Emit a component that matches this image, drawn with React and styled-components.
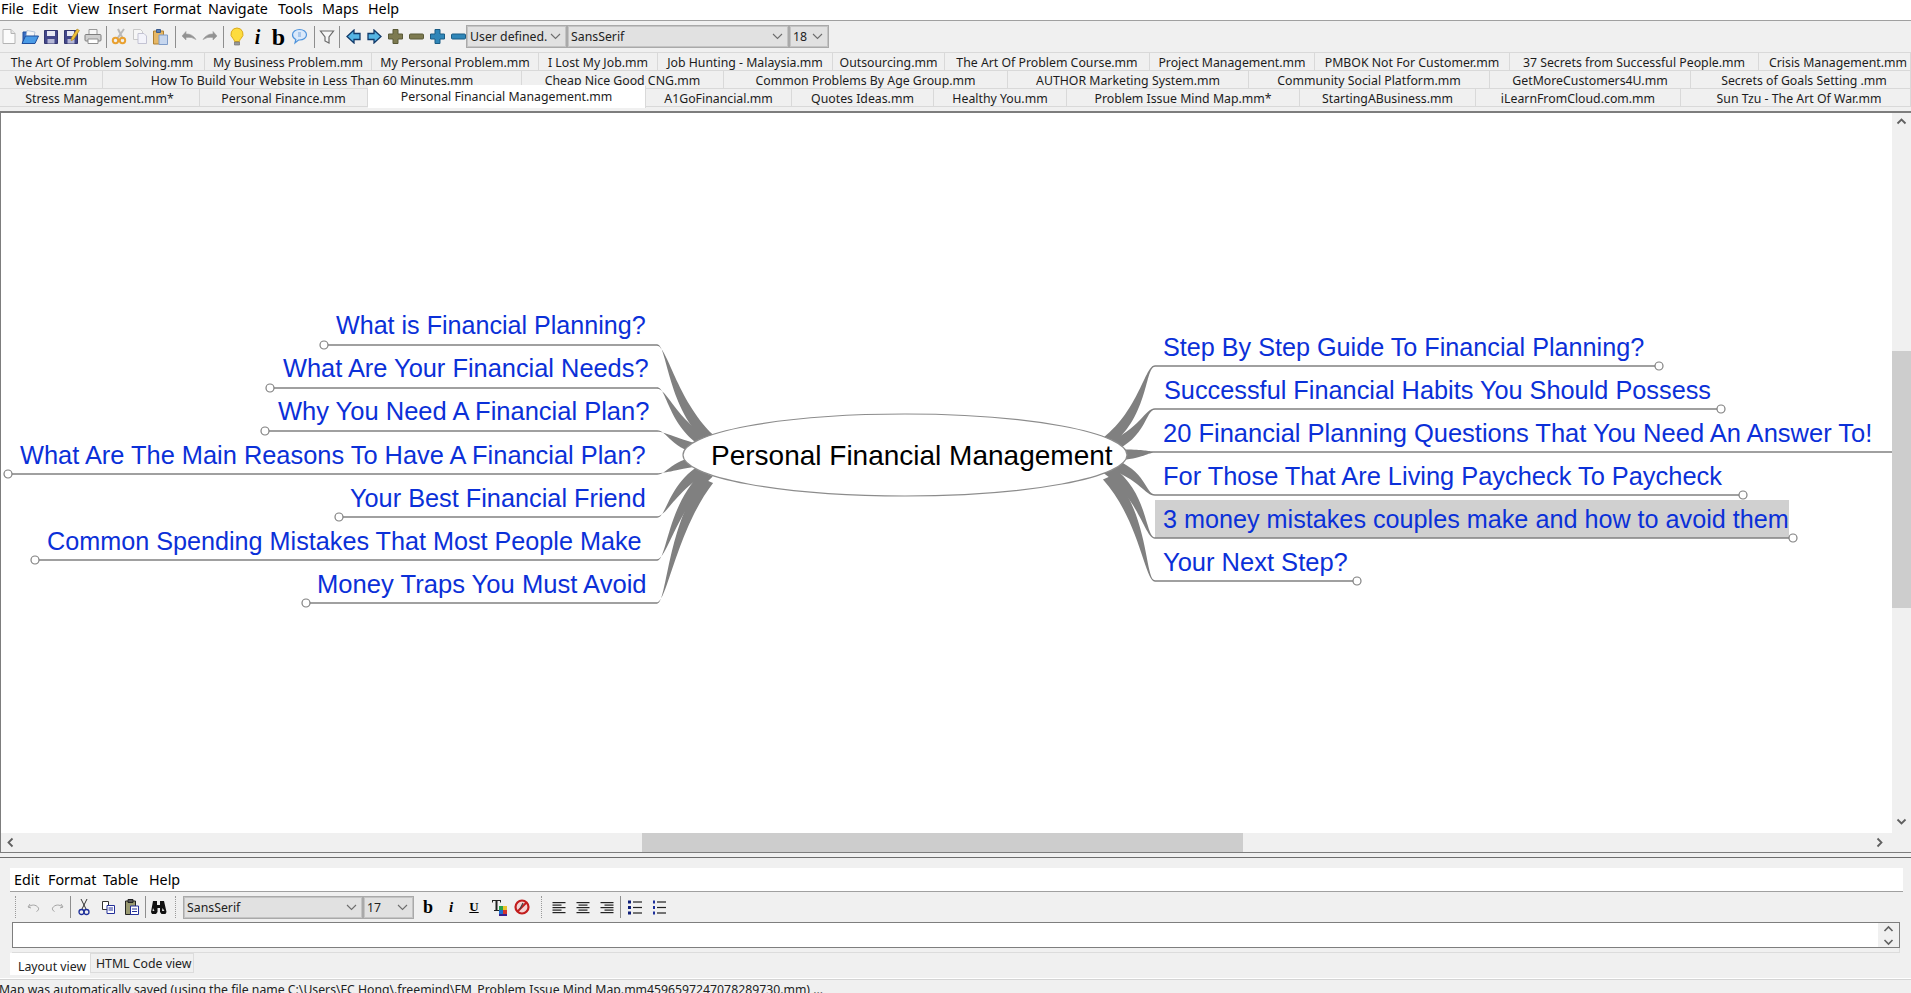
import React from "react";
import styled, { createGlobalStyle } from "styled-components";

const GlobalStyle = createGlobalStyle`
  html, body { margin: 0; padding: 0; height: 100%; overflow: hidden; background: #f0f0f0; }
  #root { height: 100%; }
`;

const UI_FONT = `"Noto Sans", "Liberation Sans", sans-serif`;
const CANVAS_TOP = 112;

const Page = styled.div`
  display: flex;
  flex-direction: column;
  height: 993px;
  overflow: hidden;
  background: #f0f0f0;
  color: #000;
  font-family: ${UI_FONT};
`;

const MenuBar = styled.div`
  display: flex;
  height: 20px;
  flex: none;
  background: #fff;
  border-bottom: 1px solid #a0a0a0;
`;
const MenuItem = styled.span`
  width: ${(p) => p.$w}px;
  font-size: 14.3px;
  line-height: ${(p) => p.$lh || 17}px;
  padding-left: ${(p) => p.$pad || 0}px;
  box-sizing: border-box;
  white-space: nowrap;
`;

const Toolbar = styled.div`
  display: flex;
  align-items: center;
  height: 31px;
  flex: none;
  margin-left: -2px;
`;
const Slot = styled.div`
  width: 21px;
  height: 24px;
  flex: none;
  display: flex;
  align-items: center;
  justify-content: center;
`;
const Sep = styled.div`
  width: 1px;
  height: 22px;
  flex: none;
  background: #8e8e8e;
  margin: 0 ${(p) => p.$after}px 0 ${(p) => p.$before}px;
`;
const GlyphText = styled.span`
  font-family: "Liberation Serif", serif;
  font-weight: bold;
  font-style: ${(p) => (p.$italic ? "italic" : "normal")};
  font-size: ${(p) => p.$size}px;
  line-height: 20px;
  text-decoration: ${(p) => (p.$under ? "underline" : "none")};
`;
const Combo = styled.div`
  width: ${(p) => p.$w}px;
  height: 23px;
  flex: none;
  box-sizing: border-box;
  margin-left: ${(p) => p.$ml || 0}px;
  display: flex;
  align-items: center;
  justify-content: space-between;
  background: #e1e1e1;
  border: 1px solid #a9a9a9;
  outline: 1px solid #c4c4c4;
  outline-offset: -2px;
  padding: 0 5px 0 3px;
  font-size: 12.3px;
  color: #222;
`;
const Chevron = () => (
  <svg width="11" height="7" viewBox="0 0 11 7">
    <path d="M1 1l4.5 4.5L10 1" fill="none" stroke="#6d6d6d" strokeWidth="1.1" />
  </svg>
);

const TabStack = styled.div`
  flex: none;
  height: 59px;
  position: relative;
`;
const TabRow = styled.div`
  display: flex;
  height: ${(p) => p.$h}px;
  overflow: ${(p) => (p.$open ? "visible" : "hidden")};
  align-items: flex-start;
`;
const Tab = styled.div`
  flex: ${(p) => (p.$last ? "1" : "none")};
  width: ${(p) => p.$w}px;
  height: ${(p) => (p.$active ? 23 : p.$h)}px;
  margin-top: ${(p) => (p.$active ? -3 : 0)}px;
  box-sizing: border-box;
  position: relative;
  padding-left: ${(p) => (p.$last ? 7 : 0)}px;
  background: ${(p) => (p.$active ? "#fff" : "#f0f0f0")};
  border-top: 1px solid ${(p) => (p.$active ? "#fff" : "#d9d9d9")};
  border-right: 1px solid #d9d9d9;
  border-bottom: ${(p) => (p.$rowEnd && !p.$active ? "1px solid #d9d9d9" : "none")};
  text-align: center;
  white-space: nowrap;
  font-size: 12.3px;
  line-height: ${(p) => (p.$active ? 22 : 19)}px;
  color: #1c1c1c;
  overflow: hidden;
`;

const CanvasFrame = styled.div`
  flex: none;
  height: 742px;
  display: grid;
  grid-template-columns: 1fr 19px;
  grid-template-rows: 1fr 19px;
  border-top: 2px solid #7d7d7d;
  border-bottom: 1px solid #7d7d7d;
  box-sizing: border-box;
`;
const Canvas = styled.div`
  position: relative;
  overflow: hidden;
  background: #fff;
  border-left: 1px solid #7d7d7d;
`;
const MapLines = styled.svg`
  position: absolute;
  left: -1px;
  top: 0;
`;
const Topic = styled.div`
  position: absolute;
  left: ${(p) => p.$x - 1}px;
  top: ${(p) => p.$base - CANVAS_TOP - 24}px;
  font-family: "Liberation Sans", sans-serif;
  font-size: ${(p) => p.$size}px;
  line-height: 30px;
  color: ${(p) => (p.$root ? "#000" : "#0b30d8")};
  white-space: nowrap;
`;
const Highlight = styled.div`
  position: absolute;
  left: 1154px;
  top: ${499 - CANVAS_TOP}px;
  width: 634px;
  height: 38px;
  background: #d0d0d0;
`;

const VScroll = styled.div`
  background: #f0f0f0;
  position: relative;
`;
const VThumb = styled.div`
  position: absolute;
  left: 0;
  right: 0;
  top: ${350 - CANVAS_TOP}px;
  height: 257px;
  background: #cdcdcd;
`;
const HScroll = styled.div`
  background: #f0f0f0;
  position: relative;
  border-left: 1px solid #7d7d7d;
`;
const HThumb = styled.div`
  position: absolute;
  left: 641px;
  top: 0;
  bottom: 0;
  width: 601px;
  background: #cdcdcd;
`;
const ScrollArrow = styled.svg`
  position: absolute;
  left: ${(p) => p.$x}px;
  top: ${(p) => p.$y}px;
`;
const Corner = styled.div`
  background: #f0f0f0;
`;

const Divider = styled.div`
  flex: none;
  height: 5px;
  box-sizing: border-box;
  border-bottom: 1px solid #6d6d6d;
`;
const EditorPanel = styled.div`
  flex: none;
  height: 120px;
  padding: 10px 8px 0 10px;
  box-sizing: border-box;
  display: flex;
  flex-direction: column;
`;
const EditorMenu = styled.div`
  display: flex;
  height: 24px;
  flex: none;
  box-sizing: border-box;
  background: #fff;
  border-bottom: 1px solid #a0a0a0;
  padding-left: 4px;
`;
const EditorBar = styled.div`
  display: flex;
  align-items: center;
  height: 30px;
  flex: none;
`;
const Grip = styled.div`
  width: 1px;
  height: 22px;
  flex: none;
  border-left: 1px dotted #9a9a9a;
  box-sizing: border-box;
  margin: 0 ${(p) => p.$after}px 0 ${(p) => p.$before}px;
`;
const EdSlot = styled.div`
  width: ${(p) => p.$w || 24}px;
  height: 24px;
  flex: none;
  display: flex;
  align-items: center;
  justify-content: center;
`;
const InputWrap = styled.div`
  height: 31px;
  flex: none;
  margin: 0 3px 0 2px;
  box-sizing: border-box;
  border-bottom: 1px solid #dcdcdc;
  border-right: 1px solid #dcdcdc;
`;
const InputBox = styled.div`
  height: 26px;
  box-sizing: border-box;
  margin-right: -1px;
  background: #fff;
  border: 1px solid #7e7e7e;
  display: flex;
  justify-content: flex-end;
`;
const Spinner = styled.div`
  width: 21px;
  background: #f0f0f0;
  display: flex;
  flex-direction: column;
  align-items: center;
  justify-content: center;
  gap: 5px;
`;
const ViewTabs = styled.div`
  display: flex;
  align-items: flex-start;
  flex: none;
`;
const ViewTab = styled.div`
  box-sizing: border-box;
  width: ${(p) => p.$w}px;
  height: ${(p) => (p.$active ? 22 : 20)}px;
  background: ${(p) => (p.$active ? "#fff" : "#f0f0f0")};
  border: ${(p) => (p.$active ? "none" : "1px solid #dcdcdc")};
  padding-left: ${(p) => (p.$active ? 8 : 5)}px;
  padding-top: ${(p) => (p.$active ? 5 : 1)}px;
  font-size: 12.3px;
  line-height: 17px;
  color: #222;
  white-space: nowrap;
`;
const StatusBar = styled.div`
  flex: none;
  height: 14px;
  border-top: 1px solid #fff;
  box-shadow: inset 0 1px 0 #d4d4d4;
  padding-top: 2px;
  margin-left: -1px;
  font-size: 12.25px;
  line-height: 17px;
  white-space: nowrap;
  color: #222;
`;

const menus = [
  ["File", 32], ["Edit", 36], ["View", 40], ["Insert", 45], ["Format", 55],
  ["Navigate", 70], ["Tools", 44], ["Maps", 46], ["Help", 40],
];
const editorMenus = [["Edit", 34], ["Format", 55], ["Table", 46], ["Help", 40]];

const row1 = [
  ["The Art Of Problem Solving.mm", 205], ["My Business Problem.mm", 167], ["My Personal Problem.mm", 167],
  ["I Lost My Job.mm", 119], ["Job Hunting - Malaysia.mm", 175], ["Outsourcing.mm", 112],
  ["The Art Of Problem Course.mm", 205], ["Project Management.mm", 165], ["PMBOK Not For Customer.mm", 195],
  ["37 Secrets from Successful People.mm", 249], ["Crisis Management.mm", 0],
];
const row2 = [
  ["Website.mm", 103], ["How To Build Your Website in Less Than 60 Minutes.mm", 419], ["Cheap Nice Good CNG.mm", 202],
  ["Common Problems By Age Group.mm", 284], ["AUTHOR Marketing System.mm", 241], ["Community Social Platform.mm", 241],
  ["GetMoreCustomers4U.mm", 201], ["Secrets of Goals Setting .mm", 0],
];
const row3 = [
  ["Stress Management.mm*", 200], ["Personal Finance.mm", 168], ["Personal Financial Management.mm", 278, true],
  ["A1GoFinancial.mm", 146], ["Quotes Ideas.mm", 142], ["Healthy You.mm", 133],
  ["Problem Issue Mind Map.mm*", 233], ["StartingABusiness.mm", 176], ["iLearnFromCloud.com.mm", 205],
  ["Sun Tzu - The Art Of War.mm", 0],
];

// label, text x, baseline, underline y, far end of underline, font size
const leftTopics = [
  ["What is Financial Planning?", 336, 333, 344, 324, 25.1],
  ["What Are Your Financial Needs?", 283, 376, 387, 270, 25.4],
  ["Why You Need A Financial Plan?", 278, 419, 430, 265, 25.5],
  ["What Are The Main Reasons To Have A Financial Plan?", 20, 463, 473, 8, 25.4],
  ["Your Best Financial Friend", 350, 506, 516, 339, 25.3],
  ["Common Spending Mistakes That Most People Make", 47, 549, 559, 35, 25.2],
  ["Money Traps You Must Avoid", 317, 592, 602, 306, 25.6],
];
const rightTopics = [
  ["Step By Step Guide To Financial Planning?", 1163, 355, 365, 1659, 25.2],
  ["Successful Financial Habits You Should Possess", 1164, 398, 408, 1721, 25.3],
  ["20 Financial Planning Questions That You Need An Answer To!", 1163, 441, 451, 1900, 25.5],
  ["For Those That Are Living Paycheck To Paycheck", 1163, 484, 494, 1743, 25.4],
  ["3 money mistakes couples make and how to avoid them", 1163, 527, 537, 1793, 25.2],
  ["Your Next Step?", 1163, 570, 580, 1357, 25.5],
];

// tapered fork from the root ellipse out to where a topic's underline starts;
// the thickness is laid along the band's normal so steep bands keep their width
const forkPath = (side, y) => {
  const dir = side === "right" ? 1 : -1;
  const cx = side === "right" ? 1155 : 657;
  const rx = side === "right" ? 1108 : 708;
  const ry = 455 + (y - 455) * 0.17;
  const t = 5.5;
  const pull = (y - ry) * 0.38;
  const c1x = cx - dir * 10;
  const c2x = rx + dir * 36;
  const c2y = ry + pull;
  const dx = cx - rx;
  const dy = y - ry;
  const len = Math.hypot(dx, dy);
  const nx = (-dy / len) * t;
  const ny = (dx / len) * t;
  return `M${cx} ${y - 0.7}C${c1x} ${y - 0.7} ${c2x - nx} ${c2y - ny} ${rx - nx} ${ry - ny}L${rx + nx} ${ry + ny}C${c2x + nx} ${c2y + ny} ${c1x} ${y + 0.7} ${cx} ${y + 0.7}Z`;
};

const MindMap = () => (
  <Canvas>
    <Highlight />
    <MapLines width="1893" height="720" viewBox={`0 ${CANVAS_TOP} 1893 720`}>
      {leftTopics.map(([t, , , y, end]) => (
        <g key={t}>
          <path d={forkPath("left", y)} fill="#808080" />
          <line x1={657} y1={y} x2={end} y2={y} stroke="#808080" strokeWidth="1.4" />
          <circle cx={end} cy={y} r="4" fill="#fff" stroke="#808080" strokeWidth="1.2" />
        </g>
      ))}
      {rightTopics.map(([t, , , y, end]) => (
        <g key={t}>
          <path d={forkPath("right", y)} fill="#808080" />
          <line x1={1155} y1={y} x2={end} y2={y} stroke="#808080" strokeWidth="1.4" />
          <circle cx={end} cy={y} r="4" fill="#fff" stroke="#808080" strokeWidth="1.2" />
        </g>
      ))}
      <ellipse cx="905" cy="454" rx="222" ry="41" fill="#fff" stroke="#8c8c8c" strokeWidth="1.2" />
    </MapLines>
    {leftTopics.concat(rightTopics).map(([t, x, base, , , size]) => (
      <Topic key={t} $x={x} $base={base} $size={size}>{t}</Topic>
    ))}
    <Topic $root $x={711} $base={464} $size={28}>Personal Financial Management</Topic>
  </Canvas>
);

const Arrow = ({ d, x, y }) => (
  <ScrollArrow $x={x} $y={y} width={11} height={11} viewBox="0 0 11 11">
    <path d={d} fill="none" stroke="#606060" strokeWidth="1.8" />
  </ScrollArrow>
);
const ChevUp = "M1.5 7.5L5.5 3.5L9.5 7.5";
const ChevDown = "M1.5 3.5L5.5 7.5L9.5 3.5";
const ChevLeft = "M7.5 1.5L3.5 5.5L7.5 9.5";
const ChevRight = "M3.5 1.5L7.5 5.5L3.5 9.5";

const NewIcon = () => (
  <svg width="16" height="17" viewBox="0 0 16 17">
    <path d="M2 1.5h8l4 4v10H2z" fill="#fbfbfb" stroke="#b4b4b4" />
    <path d="M10 1.5v4h4" fill="#e6e6e6" stroke="#b4b4b4" />
  </svg>
);
const OpenIcon = () => (
  <svg width="18" height="17" viewBox="0 0 18 17">
    <path d="M2 4h5l1 1.5h5V15H2z" fill="#3a6fc4" stroke="#1f4e9c" />
    <path d="M6 2.5l8 1.5-1 5-8-1z" fill="#f6f6f6" stroke="#9fb3cf" strokeWidth=".7" />
    <path d="M1 15.5L4.5 8H17.5L14 15.5z" fill="#4a9be6" stroke="#1f4e9c" />
  </svg>
);
const SaveIcon = () => (
  <svg width="16" height="16" viewBox="0 0 16 16">
    <path d="M1.5 1.5h13v13h-13z" fill="#43478a" stroke="#34376f" />
    <path d="M4 2h8v5H4z" fill="#e8e9f3" />
    <path d="M4.5 10h7v4.5h-7z" fill="#b5b8d6" />
  </svg>
);
const SaveAsIcon = () => (
  <svg width="17" height="17" viewBox="0 0 17 17">
    <path d="M1.5 2.5h13v13h-13z" fill="#43478a" stroke="#34376f" />
    <path d="M4 3h7v5H4z" fill="#e8e9f3" />
    <path d="M4.5 11h7v4.5h-7z" fill="#b5b8d6" />
    <path d="M14 1l2.4 1.4-5.6 9-2.6 1.3.2-2.8z" fill="#f0c23a" stroke="#a87f16" strokeWidth=".6" />
  </svg>
);
const PrintIcon = () => (
  <svg width="18" height="17" viewBox="0 0 18 17">
    <path d="M5 1.5h8v5H5z" fill="#f7f7f7" stroke="#9a9a9a" />
    <path d="M2 6.5h14q1 0 1 1V12q0 1-1 1H2q-1 0-1-1V7.5q0-1 1-1z" fill="#cfcfcf" stroke="#7f7f7f" />
    <path d="M4 11h10v4.5H4z" fill="#fff" stroke="#8f8f8f" />
  </svg>
);
const CutIcon = () => (
  <svg width="16" height="17" viewBox="0 0 16 17">
    <path d="M13 1L6 11M7 1l5 10" stroke="#b9b9b9" strokeWidth="2" fill="none" />
    <circle cx="4.5" cy="12.5" r="2.7" fill="none" stroke="#e8a030" strokeWidth="2" />
    <circle cx="11.5" cy="12.5" r="2.7" fill="none" stroke="#e8a030" strokeWidth="2" />
  </svg>
);
const CopyIcon = () => (
  <svg width="16" height="17" viewBox="0 0 16 17">
    <path d="M1.5 1.5h7l2 2v8h-9z" fill="#f6f6f6" stroke="#c8c8c8" />
    <path d="M6 5.5h6l2.5 2.5v7.5H6z" fill="#f3f3fa" stroke="#c3c3d3" />
  </svg>
);
const PasteIcon = () => (
  <svg width="17" height="18" viewBox="0 0 17 18">
    <path d="M1.5 3h10v13h-10z" fill="#e6b765" stroke="#b08030" />
    <path d="M4.5 1.5h4v3h-4z" fill="#5a7fb5" stroke="#3c5c8c" />
    <path d="M7 7h8.5v9.5H7z" fill="#c6d6ee" stroke="#7f9cc8" />
  </svg>
);
const FlipSvg = styled.svg`
  transform: ${(p) => (p.$flip ? "scaleX(-1)" : "none")};
`;
const UndoIcon = ({ flip }) => (
  <FlipSvg $flip={flip} width="16" height="13" viewBox="0 0 16 13">
    <path d="M1 6l4-4.500V4q6-.5 10 5.500-4.500-3-10-2V10z" fill="#929292" stroke="#9e9e9e" strokeWidth=".6" />
  </FlipSvg>
);
const BulbIcon = () => (
  <svg width="16" height="20" viewBox="0 0 16 20">
    <path d="M8 1a6 6 0 0 0-4 10.500c1 1 1.500 2 1.500 3h5c0-1 .5-2 1.500-3A6 6 0 0 0 8 1z" fill="#fddc3e" stroke="#dcaa1c" />
    <path d="M5.500 15h5v3h-5z" fill="#9a9a9a" stroke="#707070" strokeWidth=".7" />
  </svg>
);
const NoteIcon = () => (
  <svg width="17" height="17" viewBox="0 0 17 17">
    <path d="M8.500 1.500c4 0 7 2.300 7 5.300s-3 5.200-7 5.200l-1 .1L4 15l.8-3.500C2.700 10.500 1.500 8.800 1.500 6.800c0-3 3-5.300 7-5.300z" fill="#dbe9fa" stroke="#4f94dc" strokeWidth="1.2" />
    <path d="M7 4h3v5H7z" fill="#a9c8ec" />
  </svg>
);
const FilterIcon = () => (
  <svg width="16" height="16" viewBox="0 0 16 16">
    <path d="M1.500 2h13L10 8v6l-4-2V8z" fill="#f6f6f6" stroke="#6a6a6a" strokeWidth="1.2" />
  </svg>
);
const NavArrow = ({ right }) => (
  <FlipSvg $flip={right} width="15" height="15" viewBox="0 0 15 15">
    <path d="M1 7.500L8 1v3.500h6v6H8V14z" fill="#56b5e4" stroke="#123a6a" strokeWidth="1.3" />
  </FlipSvg>
);
const PlusIcon = ({ color, edge }) => (
  <svg width="17" height="17" viewBox="0 0 17 17">
    <path d="M6 1.500h5V6h4.500v5H11v4.500H6V11H1.500V6H6z" fill={color} stroke={edge} />
  </svg>
);
const MinusIcon = ({ color, edge }) => (
  <svg width="17" height="17" viewBox="0 0 17 17">
    <rect x="1.500" y="6" width="14" height="5" rx="1" fill={color} stroke={edge} />
  </svg>
);

const EdUndo = ({ flip }) => (
  <FlipSvg $flip={flip} width="13" height="11" viewBox="0 0 13 11">
    <path d="M3 2L1 5l3 1M1.500 5C4 2.500 9 2 11.500 6c.5 1-.5 3-2 3.500" fill="none" stroke="#a5a5a5" />
  </FlipSvg>
);
const EdCut = () => (
  <svg width="12" height="19" viewBox="0 0 12 19">
    <path d="M3 1l5 10M9 1L4 11" stroke="#333" fill="none" />
    <circle cx="3.500" cy="14" r="2.500" fill="none" stroke="#1d2f9a" strokeWidth="1.3" />
    <circle cx="8.500" cy="14" r="2.500" fill="none" stroke="#1d2f9a" strokeWidth="1.3" />
  </svg>
);
const EdCopy = () => (
  <svg width="15" height="15" viewBox="0 0 15 15">
    <path d="M1.500 1.500h6v8h-6z" fill="#fff" stroke="#333" />
    <path d="M6 5.500h7.500v8H6z" fill="#fff" stroke="#24309a" />
    <path d="M7.500 8h4.500M7.500 10h4.500" stroke="#24309a" />
  </svg>
);
const EdPaste = () => (
  <svg width="16" height="18" viewBox="0 0 16 18">
    <path d="M1.500 3h10v13.500h-10z" fill="#9a9a72" stroke="#222" />
    <path d="M4 1.500h5v3H4z" fill="#555" stroke="#222" />
    <path d="M6.500 8h8v8.500h-8z" fill="#fff" stroke="#24309a" />
    <path d="M8 11h5M8 13.500h5" stroke="#24309a" />
  </svg>
);
const Binoculars = () => (
  <svg width="17" height="15" viewBox="0 0 17 15">
    <path d="M3 1h4v4h3V1h4l2.500 11-1 2h-4l-1.500-2V8H7.500v4L6 14H2l-1-2z" fill="#111" />
    <path d="M3 8l-.5 3h2zM12.500 8l2 3H12z" fill="#ddd" />
  </svg>
);
const TextColor = () => (
  <svg width="17" height="19" viewBox="0 0 17 19">
    <path d="M1 2h9v2.500H9V3H6.500v9H8v1H3v-1h1.500V3H2v1.500H1z" fill="#222" />
    <rect x="8" y="8" width="4" height="4" fill="#2aa14a" />
    <rect x="12" y="8" width="4" height="4" fill="#e8c32a" />
    <rect x="8" y="12" width="4" height="4" fill="#1d6fd0" />
    <rect x="12" y="12" width="4" height="4" fill="#d6342c" />
    <rect x="8" y="16" width="8" height="2" fill="#3a1e8c" />
  </svg>
);
const NoFormat = () => (
  <svg width="16" height="16" viewBox="0 0 16 16">
    <circle cx="8" cy="8" r="6.500" fill="#f3d3d3" stroke="#c21d1d" strokeWidth="2.2" />
    <path d="M3.500 12.500l9-9" stroke="#c21d1d" strokeWidth="2" />
    <path d="M6 10l3-6" stroke="#444" strokeWidth="1.3" />
  </svg>
);
const AlignIcon = ({ kind }) => {
  const widths = [13, 9, 13, 9, 13];
  return (
    <svg width="14" height="13" viewBox="0 0 14 13">
      {widths.map((w, i) => {
        const x = kind === "left" ? 0.5 : kind === "center" ? (14 - w) / 2 : 13.5 - w;
        return <rect key={i} x={x} y={1 + i * 2.5} width={w} height="1.2" fill="#222" />;
      })}
    </svg>
  );
};
const ListIcon = ({ ordered }) => (
  <svg width="15" height="15" viewBox="0 0 15 15">
    {[2, 7.5, 13].map((y) => (
      <g key={y}>
        <rect x={ordered ? 2 : 1} y={y - 1.5} width={ordered ? 2 : 3} height="3" fill={ordered ? "#1c2f9c" : "#0d1d78"} />
        <rect x="6" y={y - 0.6} width="9" height="1.2" fill="#222" />
      </g>
    ))}
  </svg>
);

const TabLine = ({ tabs, h, open, rowEnd }) => (
  <TabRow $h={h} $open={open}>
    {tabs.map(([label, w, active]) => (
      <Tab key={label} $w={w} $h={h} $last={w === 0} $active={active} $rowEnd={rowEnd}>{label}</Tab>
    ))}
  </TabRow>
);

export default function App() {
  return (
    <>
      <GlobalStyle />
      <Page>
        <MenuBar>
          {menus.map(([m, w], i) => (
            <MenuItem key={m} $w={w} $pad={i === 0 ? 1 : 0}>{m}</MenuItem>
          ))}
        </MenuBar>
        <Toolbar>
          <Slot><NewIcon /></Slot>
          <Slot><OpenIcon /></Slot>
          <Slot><SaveIcon /></Slot>
          <Slot><SaveAsIcon /></Slot>
          <Slot><PrintIcon /></Slot>
          <Sep $before={3} $after={1} />
          <Slot><CutIcon /></Slot>
          <Slot><CopyIcon /></Slot>
          <Slot><PasteIcon /></Slot>
          <Sep $before={4} $after={2} />
          <Slot><UndoIcon /></Slot>
          <Slot><UndoIcon flip /></Slot>
          <Sep $before={3} $after={2} />
          <Slot><BulbIcon /></Slot>
          <Slot><GlyphText $italic $size={20}>i</GlyphText></Slot>
          <Slot><GlyphText $size={24}>b</GlyphText></Slot>
          <Slot><NoteIcon /></Slot>
          <Sep $before={4} $after={1} />
          <Slot><FilterIcon /></Slot>
          <Sep $before={2} $after={3} />
          <Slot><NavArrow /></Slot>
          <Slot><NavArrow right /></Slot>
          <Slot><PlusIcon color="#7d7a50" edge="#5a5a38" /></Slot>
          <Slot><MinusIcon color="#7d7a50" edge="#5a5a38" /></Slot>
          <Slot><PlusIcon color="#2f86b8" edge="#1b5c85" /></Slot>
          <Slot><MinusIcon color="#2f86b8" edge="#1b5c85" /></Slot>
          <Combo $w={101} $ml={-3}>User defined.<Chevron /></Combo>
          <Combo $w={222}>SansSerif<Chevron /></Combo>
          <Combo $w={40}>18<Chevron /></Combo>
        </Toolbar>
        <TabStack>
          <TabLine tabs={row1} h={18} />
          <TabLine tabs={row2} h={18} />
          <TabLine tabs={row3} h={19} open rowEnd />
        </TabStack>
        <CanvasFrame>
          <MindMap />
          <VScroll>
            <Arrow d={ChevUp} x={4} y={3} />
            <VThumb />
            <Arrow d={ChevDown} x={4} y={703} />
          </VScroll>
          <HScroll>
            <Arrow d={ChevLeft} x={4} y={4} />
            <HThumb />
            <Arrow d={ChevRight} x={1873} y={4} />
          </HScroll>
          <Corner />
        </CanvasFrame>
        <Divider />
        <EditorPanel>
          <EditorMenu>
            {editorMenus.map(([m, w]) => (
              <MenuItem key={m} $w={w} $lh={24}>{m}</MenuItem>
            ))}
          </EditorMenu>
          <EditorBar>
            <Grip $before={5} $after={5} />
            <EdSlot><EdUndo /></EdSlot>
            <EdSlot><EdUndo flip /></EdSlot>
            <Sep $before={1} $after={1} />
            <EdSlot><EdCut /></EdSlot>
            <EdSlot><EdCopy /></EdSlot>
            <EdSlot><EdPaste /></EdSlot>
            <Sep $before={1} $after={0} />
            <EdSlot><Binoculars /></EdSlot>
            <Grip $before={5} $after={7} />
            <Combo $w={180}>SansSerif<Chevron /></Combo>
            <Combo $w={51}>17<Chevron /></Combo>
            <EdSlot $w={28}><GlyphText $size={18}>b</GlyphText></EdSlot>
            <EdSlot $w={18}><GlyphText $italic $size={15}>i</GlyphText></EdSlot>
            <EdSlot $w={28}><GlyphText $under $size={13}>U</GlyphText></EdSlot>
            <EdSlot $w={22}><TextColor /></EdSlot>
            <EdSlot $w={24}><NoFormat /></EdSlot>
            <Grip $before={7} $after={5} />
            <EdSlot><AlignIcon kind="left" /></EdSlot>
            <EdSlot><AlignIcon kind="center" /></EdSlot>
            <EdSlot><AlignIcon kind="right" /></EdSlot>
            <Sep $before={1} $after={1} />
            <EdSlot><ListIcon /></EdSlot>
            <EdSlot><ListIcon ordered /></EdSlot>
          </EditorBar>
          <InputWrap>
            <InputBox>
              <Spinner>
                <svg width="11" height="8" viewBox="0 0 11 8"><path d="M1.500 6L5.500 2L9.500 6" fill="none" stroke="#606060" strokeWidth="1.6" /></svg>
                <svg width="11" height="8" viewBox="0 0 11 8"><path d="M1.500 2L5.500 6L9.500 2" fill="none" stroke="#606060" strokeWidth="1.6" /></svg>
              </Spinner>
            </InputBox>
          </InputWrap>
          <ViewTabs>
            <ViewTab $active $w={80}>Layout view</ViewTab>
            <ViewTab $w={104}>HTML Code view</ViewTab>
          </ViewTabs>
        </EditorPanel>
        <StatusBar>Map was automatically saved (using the file name C:\Users\FC Hong\.freemind\FM_Problem Issue Mind Map.mm4596597247078289730.mm) ...</StatusBar>
      </Page>
    </>
  );
}
